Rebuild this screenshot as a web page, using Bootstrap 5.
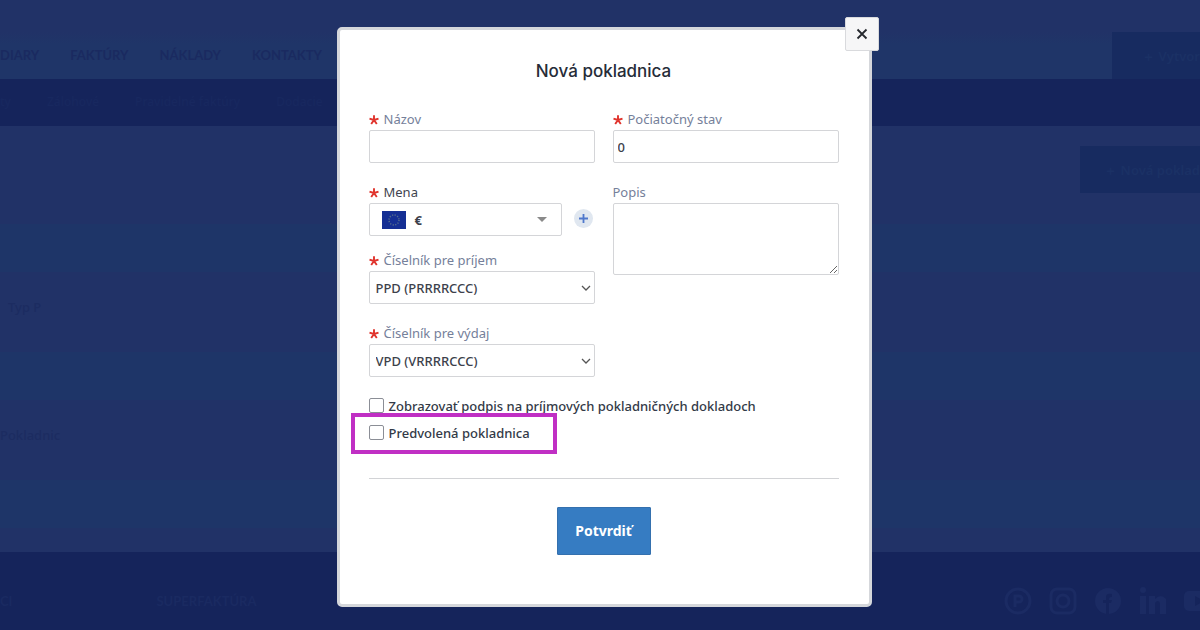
<!DOCTYPE html>
<html lang="sk">
<head>
<meta charset="utf-8">
<meta name="viewport" content="width=device-width, initial-scale=1">
<title>Nová pokladnica</title>
<link rel="stylesheet" href="https://cdn.jsdelivr.net/npm/bootstrap@5.3.0/dist/css/bootstrap.min.css">
<style>
  body { font-family: "Noto Sans", sans-serif; font-size: 13px; font-weight: 500; line-height: 20px; color: #333a47; background: #213267; overflow: hidden; }
  .topbar { height: 79px; padding-top: 32px; background: linear-gradient(#213267 32px, #1f3568 44px); color: #1a2a60; font: 700 13px/46px Lato, sans-serif; }
  .topbar a, .subbar a { color: inherit; text-decoration: none; white-space: nowrap; }
  .topbar nav { gap: 31px; }
  .ghost-btn { background: #172b60; color: #1b3165; border: 0; border-radius: 0; height: 47px; padding: 0 0 0 24px; font: 600 13px/20px "Noto Sans", sans-serif; white-space: nowrap; }
  .ghost-btn.is-top { padding-left: 30px; }
  .subbar { height: 47px; background: #15245b; color: #18285f; font-size: 12px; line-height: 46px; gap: 36px; }
  .page-main { color: #1c2c61; padding-top: 20px; background: repeating-linear-gradient(#213267 0 98px, #1e3568 98px 146px, #213267 146px 226px) 0 0 / 100% 128px, #213267; background: repeating-linear-gradient(#1e3568 0 48px, #213267 48px 128px) 0 98px / 100% 384px no-repeat; }
  .page-list { margin: 104px 0 0; }
  .page-list p { margin: 0; height: 20px; }
  .page-list p + p { margin-top: 108px; }
  .page-foot { height: 78px; padding: 35px 0 0; background: #15245b; color: #1a2a61; font: 700 13px/28px Lato, sans-serif; }
  .foot-icons { gap: 17px; color: #1b2b63; }

  .dialog-layer { overflow: hidden; padding: 27px 0 0 8px; }
  .dialog-box { max-width: 535px; }
  .dialog-content { border: 3px solid #d5d7db; border-radius: 5px; padding: 29px 30px 49px 29px; background: #fff; }
  .dialog-title { font: 500 17px/24px Inter, sans-serif; color: #262c38; margin: 0 0 26px; }
  .close-btn { position: absolute; top: -10px; right: -7px; width: 34px; height: 34px; background: #f6f6f7; border: 1px solid #d9dadd; border-radius: 2px; padding: 0 0 3px; z-index: 2; }
  .field-cols { --bs-gutter-x: 18px; }
  .field-group { margin-bottom: 19px; }
  .field-group.is-tight { margin-bottom: 14px; }
  .field-label { display: flex; align-items: center; gap: 5px; height: 20px; font-weight: 400; color: #75809a; margin-bottom: 1px; }
  .field-label.is-dark { color: #3f4450; }
  .field-label svg { width: 10px; height: 10px; margin-top: 2px; }
  .field-box { display: block; width: 100%; height: 33px; border: 1px solid #d4d5d8; border-radius: 2px; background-color: #fff; font-size: 13px; font-weight: 500; color: #3c414b; padding: 0 4px; }
  select.field-box { appearance: none; background-image: url("data:image/svg+xml,%3Csvg xmlns='http://www.w3.org/2000/svg' viewBox='0 0 10 10'%3E%3Cpath d='M1 3l4 4 4-4' fill='none' stroke='%23555' stroke-width='1.3'/%3E%3C/svg%3E"); background-repeat: no-repeat; background-size: 10px; background-position: right 3px center; padding: 0 6px; }
  textarea.field-box { height: 72px; resize: vertical; }
  .currency { padding: 0 14px 0 12px; gap: 9px; }
  .add-btn { width: 19px; height: 19px; border: 0; border-radius: 50%; background: #e0e7f0; padding: 0; margin: 0 2px 2px 12px; }
  .tick { appearance: none; width: 15px; height: 15px; margin: 0; border: 1px solid #8b8e96; border-radius: 2px; background: #fff; }
  .tick:checked { background: #367cc2; }
  .tick-list { padding-top: 15px; }
  .tick-row { height: 27px; gap: 5px; }
  .tick-row label { white-space: nowrap; }
  .marked { position: relative; }
  .marked::after { content: ""; position: absolute; top: -6px; left: -18px; width: 206px; height: 41px; border: 4px solid #c02fc4; pointer-events: none; }
  .rule { border-top: 1px solid #d2d3d6; margin: 32px 0 28px; }
  .confirm { background: #367cc2; color: #fff; border: 1px solid #3470ae; border-radius: 1px; width: 94px; height: 48px; font: 700 14px/20px "Noto Sans", sans-serif; padding: 0; }
</style>
</head>
<body>
<svg class="d-none"><symbol id="star" viewBox="0 0 10 10"><path d="M5 5V.3M5 5L.5 3.6M5 5l4.500-1.400M5 5L2.200 9M5 5l2.800 4" stroke="#e0332c" stroke-width="1.900" fill="none"/></symbol></svg>

<div class="d-flex flex-column vh-100">
  <header>
    <div class="topbar d-flex justify-content-between">
      <nav class="d-flex"><a href="#">DIARY</a><a href="#">FAKTÚRY</a><a href="#">NÁKLADY</a><a href="#">KONTAKTY</a></nav>
      <button class="ghost-btn is-top" type="button">＋ Vytvor</button>
    </div>
    <div class="subbar d-flex"><a href="#">ty</a><a href="#">Zálohové</a><a href="#">Pravidelné faktúry</a><a href="#">Dodacie</a></div>
  </header>
  <main class="page-main flex-grow-1">
    <div class="d-flex justify-content-end"><button class="ghost-btn" type="button">＋ Nová poklad</button></div>
    <div class="page-list"><p class="ps-2">Typ P</p><p>Pokladnic</p></div>
  </main>
  <footer class="page-foot d-flex justify-content-between">
    <div class="d-flex"><span>CI</span><span class="ms-5 ps-5"><span class="ms-5">SUPERFAKTÚRA</span></span></div>
    <div class="foot-icons d-flex">
      <svg width="28" height="28" viewBox="0 0 28 28" fill="none" stroke="currentColor" stroke-width="3"><circle cx="14" cy="14" r="12"/><path d="M11 20V9h4a3 3 0 010 6h-4"/></svg>
      <svg width="28" height="28" viewBox="0 0 28 28" fill="none" stroke="currentColor" stroke-width="3"><rect x="2" y="2" width="24" height="24" rx="6"/><circle cx="14" cy="14" r="6"/></svg>
      <svg width="28" height="28" viewBox="0 0 28 28"><circle cx="14" cy="14" r="13" fill="currentColor"/><path d="M12 28V16H9v-3h3v-3q0-4 6-3v3q-3-.5-3 3h3l-1 3h-2v12" fill="#15245b"/></svg>
      <svg width="28" height="28" viewBox="0 0 28 28" fill="currentColor"><circle cx="4" cy="3" r="3"/><path d="M1 9h6v18H1zM10 9h6v3q6-6 11 0v15h-6V16q-2-4-5 0v11h-6z"/></svg>
      <svg width="16" height="28" viewBox="0 0 16 28"><rect x="0" y="4" width="28" height="20" rx="5" fill="currentColor"/><path d="M11 9v10l9-5z" fill="#15245b"/></svg>
    </div>
  </footer>
</div>

<div class="modal d-block dialog-layer" role="dialog" aria-labelledby="dlg">
  <div class="dialog-box position-relative mx-auto">
    <button class="close-btn" type="button" aria-label="Zavrieť"><svg width="12" height="12" viewBox="0 0 12 12"><path d="M1.500 1.500l9 9M10.500 1.500l-9 9" stroke="#25282e" stroke-width="1.800"/></svg></button>
    <form class="dialog-content">
      <h1 class="dialog-title text-center" id="dlg">Nová pokladnica</h1>
      <div class="row field-cols">
        <div class="col-6">
          <div class="field-group">
            <label class="field-label" for="name"><svg><use href="#star"/></svg>Názov</label>
            <input class="field-box" id="name" type="text">
          </div>
          <div class="field-group is-tight">
            <label class="field-label is-dark" for="currency"><svg><use href="#star"/></svg>Mena</label>
            <div class="d-flex align-items-center">
              <button class="field-box currency d-flex align-items-center" id="currency" type="button">
                <svg width="24" height="18" viewBox="0 0 24 18"><rect width="24" height="18" fill="#152f94"/><circle cx="12" cy="9" r="5" fill="none" stroke="#566d8e" stroke-width="1.500" stroke-dasharray="1.200 1.418"/></svg>
                <span class="fw-bold">€</span>
                <svg class="ms-auto" width="10" height="5" viewBox="0 0 10 5"><path d="M0 0h10L5 5z" fill="#8a8a8a"/></svg>
              </button>
              <button class="add-btn d-flex flex-shrink-0 align-items-center justify-content-center" type="button" aria-label="Pridať menu"><svg width="9" height="9" viewBox="0 0 9 9"><path d="M4.500 0v9M0 4.500h9" stroke="#4f78cc" stroke-width="1.800"/></svg></button>
            </div>
          </div>
          <div class="field-group">
            <label class="field-label" for="income"><svg><use href="#star"/></svg>Číselník pre príjem</label>
            <select class="field-box" id="income"><option>PPD (PRRRRCCC)</option></select>
          </div>
          <div>
            <label class="field-label" for="expense"><svg><use href="#star"/></svg>Číselník pre výdaj</label>
            <select class="field-box" id="expense"><option>VPD (VRRRRCCC)</option></select>
          </div>
        </div>
        <div class="col-6">
          <div class="field-group">
            <label class="field-label" for="opening"><svg><use href="#star"/></svg>Počiatočný stav</label>
            <input class="field-box" id="opening" type="text" value="0">
          </div>
          <div>
            <label class="field-label" for="note">Popis</label>
            <textarea class="field-box" id="note"></textarea>
          </div>
        </div>
      </div>
      <div class="tick-list">
        <div class="tick-row d-flex align-items-center"><input class="tick" type="checkbox" id="sign"><label for="sign">Zobrazovať podpis na príjmových pokladničných dokladoch</label></div>
        <div class="tick-row marked d-flex align-items-center"><input class="tick" type="checkbox" id="default"><label for="default">Predvolená pokladnica</label></div>
      </div>
      <div class="rule"></div>
      <div class="text-center"><button class="confirm" type="submit">Potvrdiť</button></div>
    </form>
  </div>
</div>
<script src="https://cdn.jsdelivr.net/npm/bootstrap@5.3.0/dist/js/bootstrap.bundle.min.js"></script>
</body>
</html>
